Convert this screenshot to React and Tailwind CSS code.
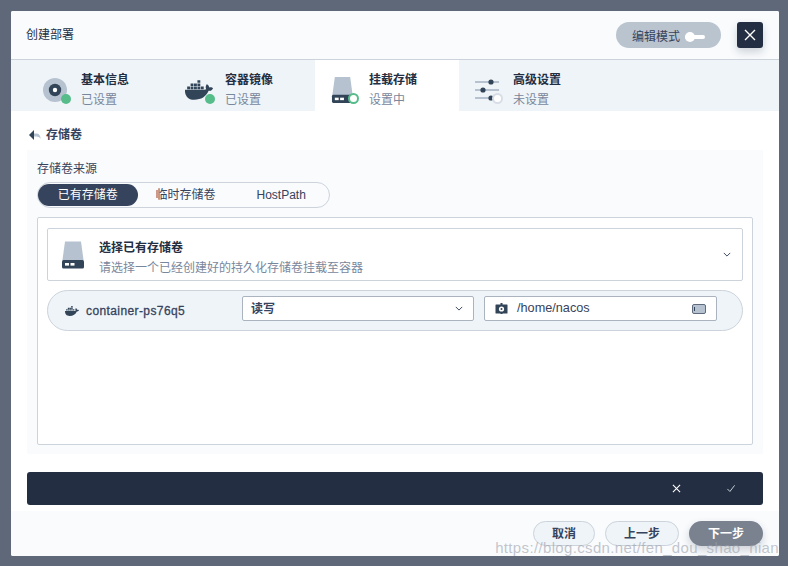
import React from 'react';
import { FaDocker } from 'react-icons/fa';

const DiskIcon = ({ className }) => (
  <svg viewBox="0 0 24 28" className={className}>
    <path d="M4 0.500h16l2.600 19H1.400z" fill="#b6c2cf" />
    <rect x="1" y="19" width="22" height="8.500" rx="1.500" fill="#324558" />
    <rect x="4" y="22" width="4" height="2.600" fill="#fff" />
    <rect x="9.500" y="22" width="4" height="2.600" fill="#fff" />
  </svg>
);

const GaugeIcon = () => (
  <svg viewBox="0 0 24 24" className="w-6 h-6">
    <circle cx="12" cy="12" r="12" fill="#b6c2cf" />
    <circle cx="12" cy="12" r="6.200" fill="#324558" />
    <circle cx="12" cy="12" r="2.200" fill="#fff" />
  </svg>
);

const SlidersIcon = () => (
  <svg viewBox="0 0 24 24" className="w-6 h-6">
    <rect x="0" y="3" width="24" height="2" fill="#b6c2cf" />
    <rect x="0" y="11" width="24" height="2" fill="#b6c2cf" />
    <rect x="0" y="19" width="18" height="2" fill="#b6c2cf" />
    <circle cx="16" cy="4" r="2.600" fill="#324558" />
    <circle cx="8" cy="12" r="2.600" fill="#324558" />
    <circle cx="16" cy="20" r="2.600" fill="#324558" />
  </svg>
);

const Tab = ({ icon, title, status, active, dot }) => (
  <div className={`w-[144px] h-full flex items-center pl-[16px] pt-[9px] ${active ? 'bg-white' : ''}`}>
    <div className="relative w-[38px] h-[30px] flex items-center justify-start">
      {icon}
      {dot === 'done' && <span className="absolute left-[18px] top-[19px] w-[10px] h-[10px] rounded-full bg-[#55bc8a]" />}
      {dot === 'doing' && <span className="absolute left-[17px] top-[18px] w-[11px] h-[11px] rounded-full bg-white border-[2px] border-[#55bc8a]" />}
      {dot === 'todo' && <span className="absolute left-[17px] top-[18px] w-[11px] h-[11px] rounded-full bg-white border-[2px] border-[#d8dee5]" />}
    </div>
    <div>
      <div className="text-[12px] leading-[20px] font-semibold text-[#242e42]">{title}</div>
      <div className="text-[12px] leading-[20px] text-[#79879c]">{status}</div>
    </div>
  </div>
);

const App = () => {
  return (
    <div className="relative w-[788px] h-[566px] overflow-hidden bg-[#5f6878] pt-[11px] pl-[11px] font-['Liberation_Sans','Noto_Sans_CJK_SC',sans-serif]">
      <div className="w-[768px] h-[545px] flex flex-col rounded-[2px] bg-white overflow-hidden">
        {/* header */}
        <div className="h-[49px] shrink-0 flex items-center justify-between pl-[15px] pr-[16px] bg-[#f9fbfd] border-b border-[#ccd3db]">
          <div className="text-[12px] text-[#242e42]">创建部署</div>
          <div className="flex items-center gap-[16px]">
            <div className="w-[105px] h-[26px] pt-[3px] rounded-full bg-[#bac4ce] flex items-center pl-[16px] text-[12px] text-[#36435c]">
              <span>编辑模式</span>
              <span className="relative ml-[5px] w-[20px] h-[4px] rounded-full bg-white">
                <span className="absolute left-0 -top-[3px] w-[10px] h-[10px] rounded-full bg-white" />
              </span>
            </div>
            <div className="w-[26px] h-[26px] rounded-[3px] bg-[#242e42] shadow-[0_4px_8px_rgba(36,46,66,0.2)] flex items-center justify-center">
              <svg viewBox="0 0 12 12" className="w-[12px] h-[12px]"><path d="M1 1l10 10M11 1L1 11" stroke="#fff" strokeWidth="1.400" fill="none" /></svg>
            </div>
          </div>
        </div>

        {/* tabs */}
        <div className="h-[51px] shrink-0 pl-[16px] bg-[#eff4f9] flex">
          <Tab icon={<GaugeIcon />} title="基本信息" status="已设置" dot="done" />
          <Tab icon={<FaDocker className="-ml-[2px] w-[28px] h-[28px] text-[#324558]" />} title="容器镜像" status="已设置" dot="done" />
          <Tab active icon={<DiskIcon className="w-[23px] h-[28px]" />} title="挂载存储" status="设置中" dot="doing" />
          <Tab icon={<SlidersIcon />} title="高级设置" status="未设置" dot="todo" />
        </div>

        {/* body */}
        <div className="flex-1 px-[16px] bg-white flex flex-col">
          <div className="h-[39px] shrink-0 pt-[9px] flex items-center pl-[2px] gap-[5px] text-[12px] font-semibold text-[#36435c]">
            <svg viewBox="0 0 12 10" className="w-[12px] h-[10px]">
              <path d="M5 0v10L0 5z" fill="#324558" />
              <path d="M5 3.500h2.500c2.500 0 4 2 4.200 5.500C10.500 7 9 6.500 5 6.500z" fill="#b6c2cf" />
            </svg>
            <span>存储卷</span>
          </div>

          <div className="h-[304px] shrink-0 bg-[#f9fbfd] px-[10px] pt-[11px] flex flex-col">
            <div className="text-[12px] leading-[16px] text-[#36435c]">存储卷来源</div>
            <div className="mt-[5px] w-[293px] h-[26px] rounded-full border border-[#ccd3db] bg-[#f9fbfd] flex items-center text-[12px] text-[#36435c]">
              <div className="w-[100px] h-[22px] rounded-full bg-[#36435c] text-white flex items-center justify-center">已有存储卷</div>
              <div className="w-[96px] text-center">临时存储卷</div>
              <div className="w-[96px] text-center">HostPath</div>
            </div>

            <div className="mt-[9px] h-[228px] rounded-[2px] border border-[#ccd3db] bg-white px-[9px] pt-[10px] flex flex-col">
              <div className="h-[53px] shrink-0 rounded-[2px] border border-[#ccd3db] flex items-center pl-[13px] pr-[11px]">
                <DiskIcon className="w-[24px] h-[28px]" />
                <div className="ml-[14px] flex-1 pt-[6px]">
                  <div className="text-[12px] leading-[20px] font-semibold text-[#242e42]">选择已有存储卷</div>
                  <div className="text-[12px] leading-[20px] text-[#79879c]">请选择一个已经创建好的持久化存储卷挂载至容器</div>
                </div>
                <svg viewBox="0 0 10 6" className="w-[8px] h-[5px]"><path d="M1 1l4 4 4-4" stroke="#36435c" strokeWidth="1.200" fill="none" /></svg>
              </div>

              <div className="mt-[9px] h-[41px] shrink-0 rounded-full border border-[#ccd3db] bg-[#eff4f9] flex items-center pl-[17px] pr-[25px]">
                <FaDocker className="w-[14px] h-[14px] text-[#324558]" />
                <span className="ml-[7px] w-[156px] text-[12px] tracking-[0.4px] text-[#36435c] [-webkit-text-stroke:0.3px_#36435c]">container-ps76q5</span>
                <div className="mb-[4px] h-[25px] w-[232px] rounded-[2px] border border-[#abb4be] bg-white flex items-center justify-between pl-[8px] pr-[10px] text-[12px] text-[#36435c]">
                  <span className="font-semibold">读写</span>
                  <svg viewBox="0 0 10 6" className="w-[8px] h-[5px]"><path d="M1 1l4 4 4-4" stroke="#36435c" strokeWidth="1.200" fill="none" /></svg>
                </div>
                <div className="mb-[4px] ml-[10px] h-[25px] w-[233px] rounded-[2px] border border-[#abb4be] bg-white flex items-center pl-[10px] pr-[10px] text-[12.7px] text-[#36435c]">
                  <svg viewBox="0 0 12 11" className="w-[13px] h-[11px]">
                    <rect x="0" y="1.500" width="12" height="9" rx="0.500" fill="#324558" />
                    <rect x="5" y="0" width="2" height="11" fill="#324558" />
                    <circle cx="6" cy="6" r="2.600" fill="#fff" />
                    <circle cx="6" cy="6" r="1" fill="#324558" />
                  </svg>
                  <span className="ml-[9px] flex-1">/home/nacos</span>
                  <span className="w-[14px] h-[10px] rounded-[2px] border-[1.5px] border-[#5f6b7c] bg-[#b6c2cf] flex items-center pl-[1px]">
                    <span className="w-[1px] h-[4px] bg-[#324558]" />
                  </span>
                </div>
              </div>
            </div>
          </div>

          <div className="mt-[18px] h-[33px] shrink-0 rounded-[3px] bg-[#242e42] flex items-center justify-end">
            <svg viewBox="0 0 10 10" className="w-[9px] h-[9px]"><path d="M1 1l8 8M9 1L1 9" stroke="#fff" strokeWidth="1.200" fill="none" /></svg>
            <svg viewBox="0 0 10 10" className="ml-[45px] mr-[27px] w-[10px] h-[9px]"><path d="M1 5.500l2.800 2.800L9 1.500" stroke="#d8dee5" strokeWidth="1" fill="none" /></svg>
          </div>
        </div>

        {/* footer */}
        <div className="h-[45px] shrink-0 mt-[6px] bg-[#f9fbfd] flex items-start justify-end gap-[10px] pt-[10px] pr-[16px] text-[12px] font-semibold">
          <div className="w-[62px] h-[25px] pt-[1px] rounded-full border border-[#ccd3db] bg-[#eff4f9] text-[#36435c] flex items-center justify-center">取消</div>
          <div className="w-[74px] h-[25px] pt-[1px] rounded-full border border-[#ccd3db] bg-[#eff4f9] text-[#36435c] flex items-center justify-center">上一步</div>
          <div className="w-[74px] h-[25px] pt-[1px] rounded-full bg-[#7a8290] text-white shadow-[0_4px_8px_rgba(36,46,66,0.2)] flex items-center justify-center">下一步</div>
        </div>
      </div>

      {/* blog watermark */}
      <div className="absolute right-[9px] top-[538px] text-[15px] leading-[20px] tracking-[0.35px] text-[#9aa0ab]/60">https://blog.csdn.net/fen_dou_shao_nian</div>
    </div>
  );
};

export default App;
